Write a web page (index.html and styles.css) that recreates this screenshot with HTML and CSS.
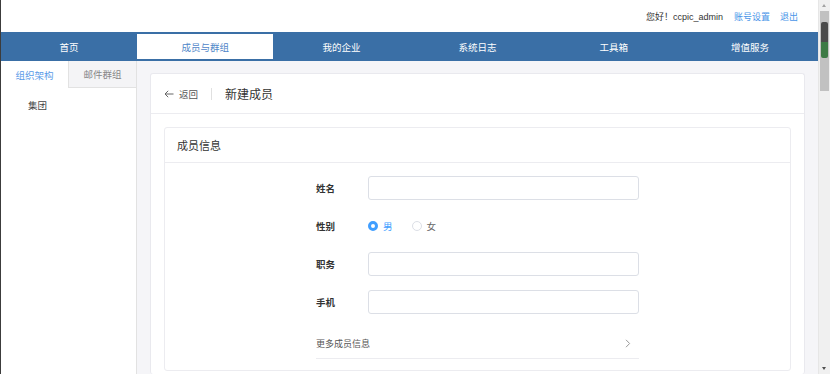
FILE: index.html
```html
<!DOCTYPE html>
<html lang="zh-CN">
<head>
<meta charset="utf-8">
<title>新建成员</title>
<link rel="stylesheet" href="styles.css">
</head>
<body>
<div class="window">
  <div class="edge"></div>
  <div class="page">
    <div class="topbar">
      <span class="hello">您好！ccpic_admin</span>
      <a class="link">账号设置</a>
      <a class="link">退出</a>
    </div>
    <div class="nav">
      <div class="nav-item">首页</div>
      <div class="nav-item active">成员与群组</div>
      <div class="nav-item">我的企业</div>
      <div class="nav-item">系统日志</div>
      <div class="nav-item">工具箱</div>
      <div class="nav-item">增值服务</div>
    </div>
    <div class="body">
      <div class="sidebar">
        <div class="side-tabs">
          <div class="side-tab active">组织架构</div>
          <div class="side-tab">邮件群组</div>
        </div>
        <div class="tree-item">集团</div>
      </div>
      <div class="main">
        <div class="card">
          <div class="card-head">
            <span class="back"><svg class="arrow" width="10" height="8" viewBox="0 0 10 8"><path d="M9.5 4H1M4.2 0.8L1 4l3.2 3.2" fill="none" stroke="#666" stroke-width="1"/></svg>返回</span>
            <span class="divider"></span>
            <span class="title">新建成员</span>
          </div>
          <div class="card-body">
            <div class="panel">
              <div class="panel-head">成员信息</div>
              <div class="form">
                <div class="row">
                  <label class="label">姓名</label>
                  <div class="input"></div>
                </div>
                <div class="row">
                  <label class="label">性别</label>
                  <div class="radios">
                    <span class="radio checked"><span class="dot"></span>男</span>
                    <span class="radio"><span class="dot"></span>女</span>
                  </div>
                </div>
                <div class="row">
                  <label class="label">职务</label>
                  <div class="input"></div>
                </div>
                <div class="row">
                  <label class="label">手机</label>
                  <div class="input"></div>
                </div>
                <div class="more">
                  <span>更多成员信息</span>
                  <svg width="6" height="9" viewBox="0 0 6 9"><path d="M1 0.8L4.6 4.5 1 8.2" fill="none" stroke="#999" stroke-width="1"/></svg>
                </div>
              </div>
            </div>
          </div>
        </div>
      </div>
    </div>
  </div>
  <div class="scrollbar">
    <div class="sb-arrow up"></div>
    <div class="sb-track">
      <div class="sb-thumb"><div class="sb-mark"></div></div>
    </div>
    <div class="sb-arrow down"></div>
  </div>
</div>
</body>
</html>
```

FILE: styles.css
```css
* { box-sizing: border-box; }
html, body { margin: 0; padding: 0; height: 100%; overflow: hidden; }
body {
  font-family: "Liberation Sans", "Noto Sans CJK SC", sans-serif;
  font-size: 9.5px;
  color: #333;
  background: #fff;
}
.window { display: flex; height: 374px; width: 830px; }
.edge { width: 1px; background: #3c3c3c; flex: none; }
.page { flex: 1; display: flex; flex-direction: column; min-width: 0; }

.topbar {
  height: 32px;
  display: flex;
  align-items: center;
  justify-content: flex-end;
  padding-right: 20px;
  gap: 10px;
  font-size: 9px;
  color: #333;
}
.hello { margin-right: 1px; }
.link { color: #4a95e8; cursor: pointer; }

.nav {
  height: 29px;
  background: #3a6fa6;
  display: grid;
  grid-template-columns: repeat(6, 1fr);
  padding: 2px 0;
}
.nav-item {
  color: #fff;
  font-size: 9.5px;
  display: flex;
  align-items: center;
  justify-content: center;
}
.nav-item.active { background: #fff; color: #4f86c8; }

.body { flex: 1; display: flex; min-height: 0; }
.sidebar { width: 136px; border-right: 1px solid #e2e2e2; flex: none; }
.side-tabs { display: flex; height: 27px; }
.side-tab {
  flex: 1;
  display: flex;
  align-items: center;
  justify-content: center;
  font-size: 9.5px;
  color: #888;
  background: #f4f4f6;
  border-left: 1px solid #e2e2e2;
  border-bottom: 1px solid #e2e2e2;
}
.side-tab.active { background: #fff; color: #5a9be8; border: none; }
.tree-item { padding: 10px 0 0 27px; font-size: 9.5px; color: #444; }

.main { flex: 1; background: #f5f5f8; padding: 12px 13px 0 13px; min-width: 0; }
.card {
  background: #fff;
  border: 1px solid #e9e9ee;
  border-radius: 3px;
  height: 100%;
  border-bottom: none;
}
.card-head {
  height: 40px;
  border-bottom: 1px solid #ececf0;
  display: flex;
  align-items: center;
  padding-left: 13px;
}
.back { display: flex; align-items: center; gap: 5px; font-size: 9.5px; color: #555; }
.divider { width: 1px; height: 12px; background: #e0e0e0; margin: 0 13px 0 13px; }
.title { font-size: 12px; color: #333; }

.card-body { padding: 13px 13px 0 13px; }
.panel { border: 1px solid #ececf0; border-radius: 3px; padding-bottom: 11px; }
.panel-head {
  height: 35px;
  border-bottom: 1px solid #ececf0;
  display: flex;
  align-items: center;
  padding-left: 12px;
  font-size: 11px;
  color: #333;
}
.form { width: 323px; margin: 0 auto; padding-top: 13px; }
.row { display: flex; align-items: center; height: 24px; margin-bottom: 14px; }
.label { width: 52px; font-size: 9.5px; font-weight: 700; color: #333; }
.input {
  flex: 1;
  height: 24px;
  border: 1px solid #dcdfe6;
  border-radius: 3px;
  background: #fff;
}
.radios { display: flex; align-items: center; gap: 19px; }
.radio { display: flex; align-items: center; gap: 5px; font-size: 9.5px; color: #666; }
.radio .dot {
  width: 10px; height: 10px;
  border: 1px solid #dcdfe6;
  border-radius: 50%;
  background: #fff;
  display: inline-block;
}
.radio.checked { color: #409eff; }
.radio.checked .dot { border: 3px solid #409eff; }

.more {
  margin-top: 14px;
  height: 31px;
  border-bottom: 1px solid #ececf0;
  display: flex;
  align-items: center;
  justify-content: space-between;
  padding-right: 8px;
  font-size: 9px;
  color: #555;
}

.scrollbar {
  width: 12px;
  flex: none;
  background: #f0f0f0;
  border-left: 1px solid #e6e6e6;
  display: flex;
  flex-direction: column;
}
.sb-arrow { height: 10px; position: relative; }
.sb-arrow.up::after, .sb-arrow.down::after {
  content: "";
  position: absolute;
  left: 3px;
  border-left: 2.5px solid transparent;
  border-right: 2.5px solid transparent;
}
.sb-arrow.up::after { top: 4px; border-bottom: 3px solid #a3a3a3; }
.sb-arrow.down::after { bottom: 4px; border-top: 3px solid #505050; }
.sb-track { flex: 1; }
.sb-thumb {
  margin: 1px 1px 0 1px;
  height: 80px;
  background: #c1c1c1;
  padding-top: 11px;
}
.sb-mark {
  margin: 0 1px;
  height: 36px;
  border-radius: 2px;
  background: linear-gradient(#4b4b4b 0 55%, #3d7a45 55% 100%);
}
```
